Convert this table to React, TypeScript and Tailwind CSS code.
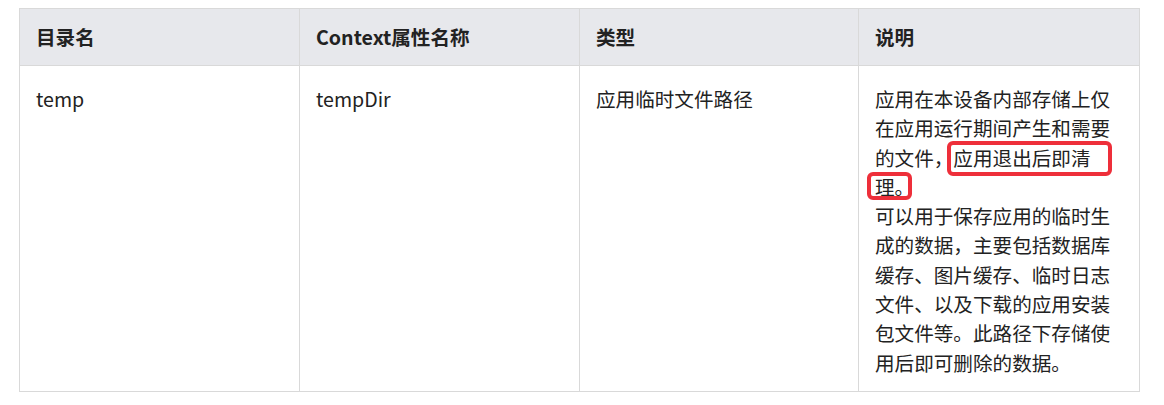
import React from "react";

export default function App() {
  const font = { fontFamily: '"Noto Sans CJK SC", "Noto Sans", sans-serif' };
  return (
    <div className="w-[1164px] h-[405px] bg-white pt-[8px] pl-[19px]" style={font}>
      <table className="border-collapse text-[19.6px] leading-[29.3px] text-[#222] table-fixed w-[1120px]">
        <colgroup>
          <col className="w-[280px]" />
          <col className="w-[280px]" />
          <col className="w-[279px]" />
          <col className="w-[281px]" />
        </colgroup>
        <thead>
          <tr className="bg-[#e7e8ec] h-[57px]">
            <th className="border border-[#d9d9d9] text-left font-bold px-[16px] py-0 align-middle">目录名</th>
            <th className="border border-[#d9d9d9] text-left font-bold px-[16px] py-0 align-middle">Context属性名称</th>
            <th className="border border-[#d9d9d9] text-left font-bold px-[16px] py-0 align-middle">类型</th>
            <th className="border border-[#d9d9d9] text-left font-bold px-[16px] py-0 align-middle">说明</th>
          </tr>
        </thead>
        <tbody>
          <tr>
            <td className="border border-[#d9d9d9] align-top px-[16px] pt-[18px] pb-[14px]">temp</td>
            <td className="border border-[#d9d9d9] align-top px-[16px] pt-[18px] pb-[14px]">tempDir</td>
            <td className="border border-[#d9d9d9] align-top px-[16px] pt-[18px] pb-[14px]">应用临时文件路径</td>
            <td className="border border-[#d9d9d9] align-top px-[16px] pt-[18px] pb-[14px] relative">
              <p>应用在本设备内部存储上仅在应用运行期间产生和需要的文件，应用退出后即清理。</p>
              <p>可以用于保存应用的临时生成的数据，主要包括数据库缓存、图片缓存、临时日志文件、以及下载的应用安装包文件等。此路径下存储使用后即可删除的数据。</p>
              <div className="absolute left-[88px] top-[75px] w-[165px] h-[35px] border-4 border-[#ee2f3a] rounded-[6px]" />
              <div className="absolute left-[8px] top-[106px] w-[45px] h-[28px] border-4 border-[#ee2f3a] rounded-[6px]" />
            </td>
          </tr>
        </tbody>
      </table>
    </div>
  );
}
